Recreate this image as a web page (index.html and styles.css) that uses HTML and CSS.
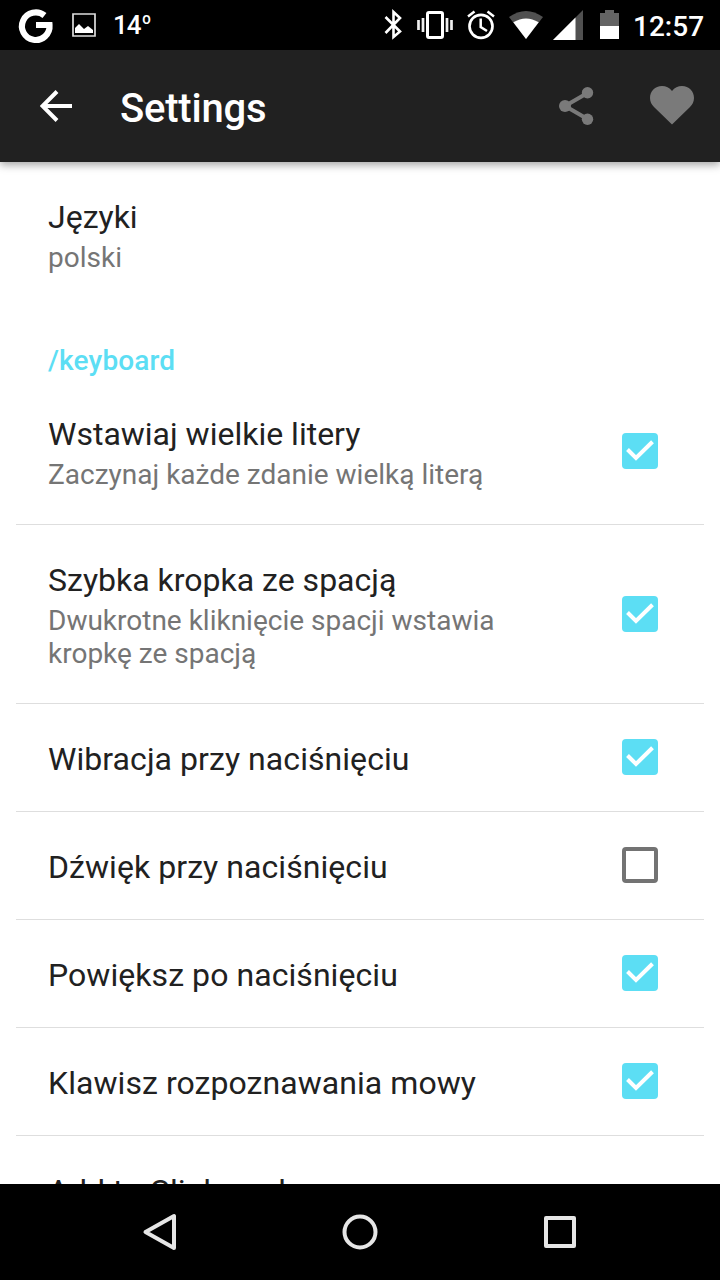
FILE: index.html
```html
<!DOCTYPE html>
<html lang="pl">
<head>
<meta charset="utf-8">
<title>Settings</title>
<link rel="stylesheet" href="styles.css">
</head>
<body>
<div class="screen">
  <svg class="defs" width="0" height="0">
    <symbol id="checked" viewBox="0 0 36 36">
      <rect width="36" height="36" rx="4" fill="#5cdef4"/>
      <path d="M5.500 16.500 14 25 30.500 8.800" fill="none" stroke="#fff" stroke-width="4"/>
    </symbol>
    <symbol id="unchecked" viewBox="0 0 36 36">
      <rect x="2" y="2" width="32" height="32" rx="2" fill="none" stroke="#737373" stroke-width="4"/>
    </symbol>
  </svg>

  <header class="status">
    <svg class="status-icons" width="110" height="50" viewBox="0 0 110 50">
      <path d="M44.500 15.500A13.800 13.800 0 1 0 49.500 25H36" fill="none" stroke="#fff" stroke-width="6.200"/>
      <path d="M73 14H95V36H73Z" fill="none" stroke="#ddd" stroke-width="1.700"/>
      <path d="M75 33V28L79 24 84 29 88 26 93 30V33Z" fill="#fff"/>
    </svg>
    <span class="temp">14<span class="deg">º</span></span>
    <svg class="status-icons system" width="250" height="50" viewBox="380 0 250 50">
      <path d="M385.500 17 400 31.500 393.500 37V12L400 18 385.500 33" fill="none" stroke="#fff" stroke-width="2.600"/>
      <rect x="427.500" y="12.500" width="15" height="25" rx="1.500" fill="none" stroke="#fff" stroke-width="3"/>
      <path d="M418.500 20V30M423 18V32M447 18V32M451.500 20V30" stroke="#eee" stroke-width="2.700"/>
      <circle cx="481" cy="26.300" r="11.500" fill="none" stroke="#fff" stroke-width="2.700"/>
      <path d="M480.700 18.500V27L487 31M468 16.500 474.500 11.500M487.500 11.500 494 16.500" fill="none" stroke="#fff" stroke-width="2.500"/>
      <path d="M509 17Q526 5 543 17L526 39Z" fill="#505050"/>
      <path d="M513.300 22.300Q526 14.500 538.700 22.300L526 39Z" fill="#fff"/>
      <path d="M553 40 583 10V40Z" fill="#505050"/>
      <path d="M553 40 575.500 17.500V40Z" fill="#fff"/>
      <path d="M600 26V13H605V10H614V13H619V26Z" fill="#646464"/>
      <path d="M600 26H619V39H600Z" fill="#fff"/>
    </svg>
    <span class="clock">12:57</span>
  </header>

  <div class="toolbar">
    <svg class="back" width="32" height="32" viewBox="0 0 32 32">
      <path d="M32 16H3M17 1.500 2.500 16 17 30.500" fill="none" stroke="#fff" stroke-width="4"/>
    </svg>
    <h1 class="title">Settings</h1>
    <svg class="share" width="35" height="38" viewBox="0 0 35 38">
      <path d="M28.500 6 6 19 28.500 32" fill="none" stroke="#7a7a7a" stroke-width="4"/>
      <g fill="#7a7a7a"><circle cx="28.500" cy="5.800" r="5.700"/><circle cx="6" cy="19" r="6"/><circle cx="28.500" cy="32.200" r="5.700"/></g>
    </svg>
    <svg class="heart" width="44" height="39" viewBox="0 0 44 39">
      <path d="M22 38.500 4 21C1.500 18.500 0 15.500 0 12 0 5 5 0 12 0 16 0 19.500 1.800 22 5 24.500 1.800 28 0 32 0 39 0 44 5 44 12 44 15.500 42.500 18.500 40 21Z" fill="#7a7a7a"/>
    </svg>
  </div>

  <main class="list">
    <section class="row plain">
      <div class="text"><div class="name">Języki</div><div class="sub">polski</div></div>
    </section>
    <h2 class="category">/keyboard</h2>
    <section class="row">
      <div class="text"><div class="name">Wstawiaj wielkie litery</div><div class="sub">Zaczynaj każde zdanie wielką literą</div></div>
      <svg class="box"><use href="#checked"/></svg>
    </section>
    <section class="row">
      <div class="text"><div class="name">Szybka kropka ze spacją</div><div class="sub">Dwukrotne kliknięcie spacji wstawia<br>kropkę ze spacją</div></div>
      <svg class="box"><use href="#checked"/></svg>
    </section>
    <section class="row single">
      <div class="text"><div class="name">Wibracja przy naciśnięciu</div></div>
      <svg class="box"><use href="#checked"/></svg>
    </section>
    <section class="row single">
      <div class="text"><div class="name">Dźwięk przy naciśnięciu</div></div>
      <svg class="box"><use href="#unchecked"/></svg>
    </section>
    <section class="row single">
      <div class="text"><div class="name">Powiększ po naciśnięciu</div></div>
      <svg class="box"><use href="#checked"/></svg>
    </section>
    <section class="row single">
      <div class="text"><div class="name">Klawisz rozpoznawania mowy</div></div>
      <svg class="box"><use href="#checked"/></svg>
    </section>
    <section class="row">
      <div class="text"><div class="name">Add to Clipboard</div></div>
    </section>
  </main>

  <nav class="navbar">
    <svg width="40" height="40" viewBox="0 0 40 40"><path d="M34 4V36L5.500 20Z"/></svg>
    <svg width="40" height="40" viewBox="0 0 40 40"><circle cx="20" cy="20" r="15.500"/></svg>
    <svg width="40" height="40" viewBox="0 0 40 40"><rect x="6" y="6" width="28" height="28"/></svg>
  </nav>
</div>
</body>
</html>
```
FILE: styles.css
```css
* { box-sizing: border-box; }
body { margin: 0; background: #fff; font-family: Roboto, sans-serif; }
.defs { position: absolute; }
.screen { width: 720px; height: 1280px; display: flex; flex-direction: column; overflow: hidden; }

.status { height: 50px; flex: none; display: flex; align-items: center; background: #000; color: #fff; }
.status-icons { flex: none; display: block; }
.temp { width: 60px; padding-left: 3px; font-size: 26px; line-height: 50px; font-weight: 500; letter-spacing: -1px; white-space: nowrap; }
.deg { margin-left: 1px; font-size: 22px; vertical-align: 3px; line-height: 1; }
.system { margin-left: 210px; }
.clock { padding: 3px 0 0 3px; font-size: 28px; line-height: 47px; font-weight: 500; }

.toolbar { height: 112px; flex: none; display: flex; align-items: center; padding: 0 26px 0 40px; background: #212121; box-shadow: 0 3px 8px rgba(0, 0, 0, .35); z-index: 1; }
.title { flex: 1; margin: 5px 0 0 48px; font-size: 40px; line-height: 48px; font-weight: 500; letter-spacing: -.2px; color: #fff; }
.share { margin-right: 56px; }
.heart { margin-bottom: 1px; }

.list { flex: 1; min-height: 0; overflow: hidden; padding: 0 16px; }
.row { display: flex; align-items: center; justify-content: space-between; padding: 36px 46px 33px 32px; border-bottom: 1px solid #dedede; }
.plain { border-bottom: 0; }
.name { font-size: 32px; line-height: 38px; color: #212121; white-space: nowrap; }
.single .name { letter-spacing: .06px; }
.sub { margin-top: 5px; font-size: 28px; line-height: 33px; color: #757575; white-space: nowrap; }
.box { width: 36px; height: 36px; flex: none; margin: -20px 0 -16px; position: relative; top: -2px; }
.category { margin: 0; padding: 37px 32px 2px; font-size: 28px; line-height: 33px; font-weight: 500; letter-spacing: .15px; color: #5cdef4; }

.box { margin: -18px 0; }
.navbar { height: 96px; flex: none; display: flex; align-items: center; justify-content: center; gap: 160px; background: #000; }
.navbar svg { fill: none; stroke: #e6e6e6; stroke-width: 4; stroke-linejoin: round; }
```
